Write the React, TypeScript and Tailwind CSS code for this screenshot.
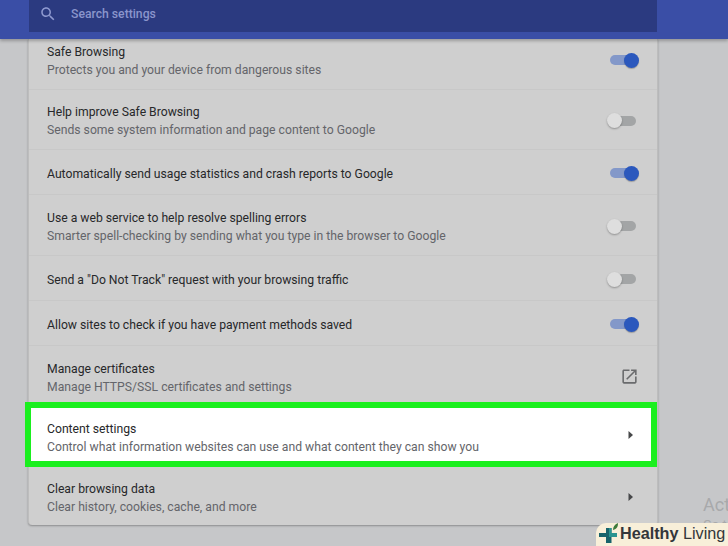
import React from 'react';

type Row = {
  title: string;
  sub?: string;
  height: string;
  textPad?: string;
  toggle?: 'on' | 'off';
  link?: boolean;
};

const rows: Row[] = [
  { title: 'Safe Browsing', sub: 'Protects you and your device from dangerous sites', height: 'h-[51px] pb-[8px]', textPad: 'pt-[2px]', toggle: 'on' },
  { title: 'Help improve Safe Browsing', sub: 'Sends some system information and page content to Google', height: 'h-[60px] pt-[2px]', toggle: 'off' },
  { title: 'Automatically send usage statistics and crash reports to Google', height: 'h-[45px] pt-[2px]', textPad: 'pt-[2px]', toggle: 'on' },
  { title: 'Use a web service to help resolve spelling errors', sub: 'Smarter spell-checking by sending what you type in the browser to Google', height: 'h-[61px] pt-[2px]', textPad: 'pt-[2px]', toggle: 'off' },
  { title: 'Send a "Do Not Track" request with your browsing traffic', height: 'h-[45px] pt-[2px]', textPad: 'pt-[2px]', toggle: 'off' },
  { title: 'Allow sites to check if you have payment methods saved', height: 'h-[45px] pt-[2px]', textPad: 'pt-[2px]', toggle: 'on' },
  { title: 'Manage certificates', sub: 'Manage HTTPS/SSL certificates and settings', height: 'h-[60px]', textPad: 'pt-[4px]', link: true },
];

const Toggle = ({ on }: { on: boolean }) =>
  on ? (
    <div className="relative w-[29px] h-[15px]">
      <div className="absolute left-0 right-[2px] top-[2.5px] h-[10px] rounded-full bg-[#8398c9]" />
      <div className="absolute right-0 top-0 w-[15px] h-[15px] rounded-full bg-[#2b58bd] shadow-[0_1px_1px_rgba(0,0,0,0.25)]" />
    </div>
  ) : (
    <div className="relative w-[29px] h-[15px] mr-[3px]">
      <div className="absolute left-[3px] right-0 top-[2.5px] h-[10px] rounded-full bg-[#a3a5a6]" />
      <div className="absolute left-0 top-0 w-[15px] h-[15px] rounded-full bg-[#dedede] shadow-[0_1px_2px_rgba(0,0,0,0.3)]" />
    </div>
  );

const Arrow = ({ className }: { className: string }) => (
  <svg width="5" height="8" viewBox="0 0 5 8" className={className}>
    <path d="M0.5 0 L5 4 L0.5 8 Z" fill="#47484a" />
  </svg>
);

const RowText = ({ title, sub, pad }: { title: string; sub?: string; pad?: string }) => (
  <div className={`leading-[18px] text-[12.2px] ${pad ?? ''}`}>
    <div className="text-[#27282a]">{title}</div>
    {sub && <div className="text-[#64656a]">{sub}</div>}
  </div>
);

const SettingRow = ({ row, last }: { row: Row; last: boolean }) => (
  <div className={`${row.height} flex items-center justify-between pl-[18px] pr-[18px] ${last ? '' : 'border-b border-[#c8c8c8]'}`}>
    <RowText title={row.title} sub={row.sub} pad={row.textPad} />
    {row.toggle && <Toggle on={row.toggle === 'on'} />}
    {row.link && (
      <svg width="19" height="19" viewBox="0 0 24 24" fill="#6a6b6d">
        <path d="M19 19H5V5h7V3H5c-1.11 0-2 .9-2 2v14c0 1.1.89 2 2 2h14c1.1 0 2-.9 2-2v-7h-2v7zM14 3v2h3.59l-9.83 9.83 1.41 1.41L19 6.41V10h2V3h-7z" />
      </svg>
    )}
  </div>
);

const App = () => {
  return (
    <div className="relative w-[728px] h-[546px] overflow-hidden bg-[#c6c7c9] font-['Roboto',sans-serif]">
      {/* Header */}
      <header className="relative z-10 h-[39px] bg-[#3a4ea6] pl-[29px] pr-[71px] shadow-[0_2px_3px_rgba(0,0,0,0.25)]">
        <div className="h-[32px] bg-[#2b3a80] flex items-center pl-[10px] pb-[4px]">
          <svg width="18" height="18" viewBox="0 0 24 24" fill="#8f9ad0" className="mr-[14px]">
            <path d="M15.5 14h-.79l-.28-.27C15.41 12.59 16 11.11 16 9.5 16 5.91 13.09 3 9.5 3S3 5.91 3 9.5 5.91 16 9.5 16c1.61 0 3.09-.59 4.23-1.57l.27.28v.79l5 4.99L20.49 19l-4.99-5zm-6 0C7.01 14 5 11.99 5 9.5S7.01 5 9.5 5 14 7.01 14 9.5 11.99 14 9.5 14z" />
          </svg>
          <span className="text-[12.2px] font-medium text-[#8a95cc]">Search settings</span>
        </div>
      </header>

      {/* Settings card */}
      <main className="ml-[28px] w-[630px] h-[486px] bg-[#cfcfcf] rounded-b-[4px] shadow-[0_1px_2px_rgba(0,0,0,0.3)] border-l border-r border-[#bdbdbd]">
        {rows.map((row, i) => (
          <SettingRow key={row.title} row={row} last={i === rows.length - 1} />
        ))}

        {/* Highlighted row */}
        <div className="relative z-[1] h-[65px] ml-[-4px] -mt-[4px] -mb-[1px] border-[6px] border-[#1aef1e] bg-white flex items-center justify-between pl-[16px]">
          <RowText title="Content settings" sub="Control what information websites can use and what content they can show you" pad="pt-[6px]" />
          <Arrow className="mr-[18px] mt-[1px]" />
        </div>

        <div className="h-[59px] flex items-center justify-between pl-[18px] pt-[3px]">
          <RowText title="Clear browsing data" sub="Clear history, cookies, cache, and more" pad="pt-[2px]" />
          <Arrow className="mr-[24px]" />
        </div>
      </main>

      {/* Activate watermark, cut off by the badge */}
      <div className="absolute left-[703px] top-[493px] text-[18px] leading-[24px] text-[#a8a9ab] whitespace-nowrap">
        <div>Activate</div>
        <div className="text-[13px] leading-[16px]">Go to</div>
      </div>

      {/* Badge */}
      <div className="absolute left-[596px] top-[523px] w-[140px] h-[30px] rounded-tl-[10px] bg-[#f8efd9] flex items-start pl-[3px]">
        <svg width="20" height="21" viewBox="0 0 20 21" className="shrink-0">
          <path d="M7 5 h5.500 v5 h5.500 v4 h-5.500 v6 h-5.500 v-6 h-7 v-4 h7 z" fill="#17636b" />
          <path d="M10 5 h2.500 v5 h5.500 v4 h-8 z" fill="#2a9490" />
          <path d="M14 7 C14 4 15.500 1.500 19 0 C19 3.500 18 6 14 7 Z" fill="#3d7a3a" />
        </svg>
        <span className="text-[16.2px] leading-[20px] font-['Liberation_Sans',sans-serif] text-[#33363a] ml-[1px] whitespace-nowrap">
          <span className="font-bold">Healthy</span> Living
        </span>
      </div>
    </div>
  );
};

export default App;
